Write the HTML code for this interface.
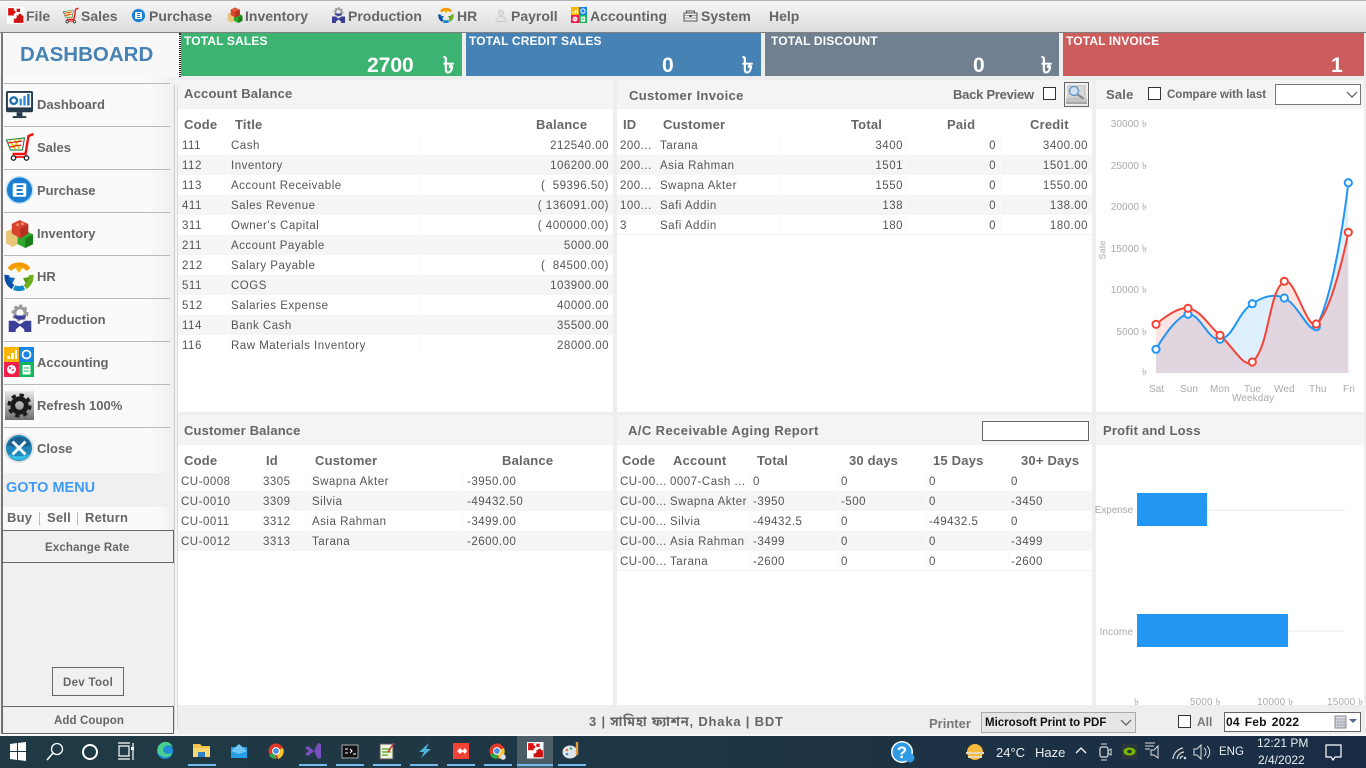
<!DOCTYPE html>
<html><head><meta charset="utf-8"><title>Dashboard</title>
<style>
html,body{margin:0;padding:0;width:1366px;height:768px;overflow:hidden;background:#eee;font-family:"Liberation Sans",sans-serif;color:#666}
*{box-sizing:border-box}
.a{position:absolute;display:block}
.t{position:absolute;white-space:nowrap;line-height:16px;height:16px}
.m{font-weight:bold;font-size:14px;color:#666;top:8px}
.k{font-weight:bold;font-size:12px;color:#fff;top:33px;letter-spacing:.15px}
.v{font-weight:bold;font-size:21px;color:#fff;top:57px;line-height:18px;height:18px}
.tk{font-weight:bold;font-size:23px;color:#fff;top:55px;line-height:20px;height:20px}
.h{font-weight:bold;font-size:13px;color:#666;letter-spacing:.2px;margin-top:1px}
.th{font-weight:bold;font-size:13px;color:#666;letter-spacing:.2px;margin-top:1px}
.c{font-size:11.5px;color:#555;letter-spacing:.5px;margin-top:1px}
.s{font-weight:bold;font-size:13px;color:#666;left:37px;margin-top:1px}
.row{position:absolute;height:20px}
.sh{background:#f5f5f5}
.sep{position:absolute;width:1px;background:#fafafa}
.ln{position:absolute;left:4px;width:166px;height:1px;background:#b8b8b8}
.ax{font-size:10px;color:#aaa;line-height:12px;height:12px;margin-top:1px;letter-spacing:.1px}
.w{color:#e8eef2;font-size:13px}
.ul{position:absolute;top:764px;height:2px;background:#76b9ed;width:28px}
.cb{position:absolute;width:13px;height:13px;border:1px solid #333;background:#fff}
</style></head>
<body>
<svg width="0" height="0" style="position:absolute">
<defs>
<symbol id="puz" viewBox="0 0 30 30"><rect width="30" height="30" fill="#fff"/><path d="M2 2h10v4a3 3 0 0 1 0 6v3H2z" fill="#d11"/><path d="M16 15h4a3 3 0 0 1 6 0h3v13H12V20a3 3 0 0 0 4-5z" fill="#c11"/><path d="M17 3h6v6h-6z" fill="#d11"/></symbol>
<symbol id="mon" viewBox="0 0 30 30"><rect x="1" y="1" width="28" height="22" rx="2" fill="#263a4c"/><rect x="3" y="3" width="24" height="15" fill="#fff"/><circle cx="9" cy="11" r="3.4" fill="none" stroke="#1c6fae" stroke-width="2.4"/><rect x="15" y="9" width="2.4" height="7" fill="#2a8fd8"/><rect x="19" y="6" width="2.4" height="10" fill="#2a8fd8"/><rect x="23" y="4" width="2.4" height="12" fill="#1c6fae"/><rect x="12" y="23" width="6" height="4" fill="#263a4c"/><rect x="8" y="27" width="14" height="2" fill="#263a4c"/></symbol>
<symbol id="cart" viewBox="0 0 30 30"><path d="M29 2l-5 2-3 18H8" fill="none" stroke="#e11" stroke-width="2.4"/><path d="M7 25h17" stroke="#e11" stroke-width="1.8"/><path d="M2 8l18-2-2 12H6z" fill="#fff" stroke="#0a7a3a" stroke-width="1"/><path d="M5 9l6 8M10 7l5 10M16 7L8 16" stroke="#e4c800" stroke-width="1.5"/><path d="M3 11l15-2M5 15l12-2" stroke="#d22" stroke-width="1.2"/><circle cx="9" cy="26" r="2.2" fill="#fff" stroke="#222" stroke-width="1.3"/><circle cx="22" cy="26" r="2.2" fill="#fff" stroke="#222" stroke-width="1.3"/></symbol>
<symbol id="pur" viewBox="0 0 30 30"><circle cx="15" cy="15" r="14.5" fill="#bfe0f8"/><circle cx="15" cy="15" r="13" fill="#1a7fd0"/><rect x="8" y="8" width="14" height="14" rx="2" fill="#fff"/><path d="M12 11h7M12 15h6M12 19h7" stroke="#1a7fd0" stroke-width="2"/></symbol>
<symbol id="inv" viewBox="0 0 30 30"><path d="M1 13l7-3 7 3v12l-7 4-7-4z" fill="#e8c678"/><path d="M13 16l8-4 8 4v10l-8 4-8-4z" fill="#2fa82f"/><path d="M21 20v10l8-4V16z" fill="#1c7d1c"/><path d="M7 5l8-4 9 4v10l-8 5-9-5z" fill="#d8442e"/><path d="M16 10v10l8-5V5z" fill="#b83020"/><circle cx="13" cy="6" r="1.5" fill="#ee8a70"/><circle cx="18" cy="5" r="1.5" fill="#ee8a70"/></symbol>
<symbol id="hr" viewBox="0 0 30 30"><g fill="none" stroke-width="5"><path d="M5.500 8.500a12 12 0 0 1 19 0" stroke="#f59a00"/><path d="M27 14a12 12 0 0 1-6 12" stroke="#6fb21e"/><path d="M20 26.500a12 12 0 0 1-10 0" stroke="#1487c9"/><path d="M9 26A12 12 0 0 1 3 14" stroke="#0b4da2"/></g><path d="M11 6h8l-4 6z" fill="#f4b400"/><path d="M26 16l-7 1 3 6z" fill="#5a9a18"/><path d="M4 16l7 1-3 6z" fill="#1267b5"/></symbol>
<symbol id="prod" viewBox="0 0 30 30"><circle cx="15" cy="8" r="6" fill="none" stroke="#9a9a9a" stroke-width="3.500"/><circle cx="15" cy="8" r="8.500" fill="none" stroke="#9a9a9a" stroke-width="2.500" stroke-dasharray="3.500 3"/><path d="M8 11a7 5 0 0 0 14 0z" fill="#3b3f98"/><path d="M2 17h7l6 4 6-4h7v13h-8v-3l-5-4-5 4v3H2z" fill="#3b3f98"/></symbol>
<symbol id="acc" viewBox="0 0 30 30"><rect width="15" height="15" fill="#fdb300"/><rect x="15" width="15" height="15" fill="#1784e8"/><rect y="15" width="15" height="15" fill="#f01f4b"/><rect x="15" y="15" width="15" height="15" fill="#12b85a"/><path d="M3 9h3v3H3zM7 6h3v6H7zM11 3h2v9h-2z" fill="#fff"/><circle cx="22.500" cy="7.500" r="4" fill="none" stroke="#fff" stroke-width="1.800"/><circle cx="7.500" cy="22.500" r="4.500" fill="#fff"/><circle cx="6" cy="21" r="1" fill="#f01f4b"/><circle cx="9" cy="23" r="1" fill="#f01f4b"/><rect x="18.500" y="18" width="8" height="9.500" fill="#fff"/><path d="M20 21h5M20 24h5" stroke="#12b85a"/></symbol>
<symbol id="ref" viewBox="0 0 30 30"><defs><linearGradient id="gg" x1="0" y1="0" x2="0" y2="1"><stop offset="0" stop-color="#e8e8e8"/><stop offset="1" stop-color="#6e6e6e"/></linearGradient></defs><rect width="30" height="30" fill="url(#gg)"/><circle cx="15" cy="15" r="7" fill="none" stroke="#1a1a1a" stroke-width="5"/><circle cx="15" cy="15" r="11" fill="none" stroke="#1a1a1a" stroke-width="3" stroke-dasharray="4.500 4.100"/></symbol>
<symbol id="cls" viewBox="0 0 30 30"><circle cx="15" cy="15" r="15" fill="#e2e2e2"/><circle cx="15" cy="15" r="13" fill="#1f86b8"/><path d="M3 12a13 13 0 0 1 24 0c-7 3-17 3-24 0z" fill="#1d5f8f"/><path d="M4 21a13 13 0 0 0 22 0c-6 3-16 3-22 0z" fill="#35c0e8"/><path d="M8.500 8.500l13 13M21.500 8.500l-13 13" stroke="#eef8fc" stroke-width="3"/></symbol>
<symbol id="pay" viewBox="0 0 30 30"><circle cx="15" cy="9" r="6" fill="#ddd" stroke="#aaa"/><path d="M4 28c0-8 5-11 11-11s11 3 11 11z" fill="#e4e4e4" stroke="#aaa"/></symbol>
<symbol id="sys" viewBox="0 0 30 30"><path d="M7 10V6h16v4" fill="none" stroke="#555" stroke-width="2"/><rect x="2" y="10" width="26" height="16" fill="#eee" stroke="#555" stroke-width="2"/><path d="M2 15h26M2 20h26" stroke="#555"/><rect x="13" y="14" width="4" height="4" fill="#333"/></symbol>
</defs>
</svg>

<!-- top menu -->
<div class="a" style="left:0;top:0;width:1366px;height:33px;background:linear-gradient(#f6f6f6,#dcdcdc);border-top:1px solid #b4b4bc;border-bottom:1px solid #808080"></div>
<svg class="a" style="left:7px;top:7px" width="17" height="17"><use href="#puz"/></svg><span class="t m" style="left:26px">File</span>
<svg class="a" style="left:62px;top:7px" width="17" height="17"><use href="#cart"/></svg><span class="t m" style="left:81px">Sales</span>
<svg class="a" style="left:131px;top:8px" width="15" height="15"><use href="#pur"/></svg><span class="t m" style="left:149px">Purchase</span>
<svg class="a" style="left:227px;top:7px" width="16" height="16"><use href="#inv"/></svg><span class="t m" style="left:245px">Inventory</span>
<svg class="a" style="left:331px;top:7px" width="15" height="17"><use href="#prod"/></svg><span class="t m" style="left:348px">Production</span>
<svg class="a" style="left:438px;top:7px" width="16" height="16"><use href="#hr"/></svg><span class="t m" style="left:457px">HR</span>
<svg class="a" style="left:494px;top:7px" width="14" height="17"><use href="#pay"/></svg><span class="t m" style="left:511px">Payroll</span>
<svg class="a" style="left:571px;top:7px" width="16" height="16"><use href="#acc"/></svg><span class="t m" style="left:590px">Accounting</span>
<svg class="a" style="left:683px;top:8px" width="15" height="15"><use href="#sys"/></svg><span class="t m" style="left:701px">System</span>
<span class="t m" style="left:769px">Help</span>

<!-- KPI -->
<div class="a" style="left:0;top:33px;width:179px;height:44px;background:#f8f8f8"></div>
<span class="t" style="left:20px;top:43px;font-weight:bold;font-size:20.500px;line-height:24px;height:24px;color:#4682b4">DASHBOARD</span>
<div class="a" style="left:179px;top:33px;width:2px;height:44px;border-left:1px dotted #222;border-right:1px dotted #222"></div>
<div class="a" style="left:181px;top:33px;width:281px;height:43px;background:#3cb371"></div>
<div class="a" style="left:466px;top:33px;width:295px;height:43px;background:#4682b4"></div>
<div class="a" style="left:765px;top:33px;width:294px;height:43px;background:#708090"></div>
<div class="a" style="left:1063px;top:33px;width:301px;height:43px;background:#cd5c5c"></div>
<span class="t k" style="left:184px">TOTAL SALES</span>
<span class="t k" style="left:469px">TOTAL CREDIT SALES</span>
<span class="t k" style="left:771px">TOTAL DISCOUNT</span>
<span class="t k" style="left:1066px">TOTAL INVOICE</span>
<span class="t v" style="left:367px">2700</span><span class="t tk" style="left:443px">৳</span>
<span class="t v" style="left:662px">0</span><span class="t tk" style="left:742px">৳</span>
<span class="t v" style="left:973px">0</span><span class="t tk" style="left:1041px">৳</span>
<span class="t v" style="left:1331px">1</span>

<!-- sidebar -->
<div class="a" style="left:1px;top:33px;width:2px;height:702px;background:#777"></div>
<div class="a" style="left:3px;top:77px;width:171px;height:396px;background:linear-gradient(90deg,#fafafa 85%,#f0f0f0)"></div>
<div class="a" style="left:175px;top:77px;width:3px;height:658px;background:#f5f5f5"></div>
<div class="a" style="left:174px;top:85px;width:1px;height:645px;background:#ccc"></div>
<div class="a" style="left:177px;top:85px;width:1px;height:645px;background:#d8d8d8"></div>
<div class="ln" style="top:83px"></div><div class="ln" style="top:126px"></div><div class="ln" style="top:169px"></div><div class="ln" style="top:212px"></div><div class="ln" style="top:255px"></div><div class="ln" style="top:298px"></div><div class="ln" style="top:341px"></div><div class="ln" style="top:384px"></div><div class="ln" style="top:427px"></div>
<svg class="a" style="left:5px;top:90px" width="29" height="29"><use href="#mon"/></svg><span class="t s" style="top:96px">Dashboard</span>
<svg class="a" style="left:4px;top:132px" width="31" height="30"><use href="#cart"/></svg><span class="t s" style="top:139px">Sales</span>
<svg class="a" style="left:5px;top:175px" width="29" height="30"><use href="#pur"/></svg><span class="t s" style="top:182px">Purchase</span>
<svg class="a" style="left:5px;top:219px" width="29" height="29"><use href="#inv"/></svg><span class="t s" style="top:225px">Inventory</span>
<svg class="a" style="left:4px;top:261px" width="30" height="30"><use href="#hr"/></svg><span class="t s" style="top:268px">HR</span>
<svg class="a" style="left:7px;top:304px" width="26" height="30"><use href="#prod"/></svg><span class="t s" style="top:311px">Production</span>
<svg class="a" style="left:4px;top:347px" width="30" height="30"><use href="#acc"/></svg><span class="t s" style="top:354px">Accounting</span>
<svg class="a" style="left:5px;top:391px" width="29" height="29"><use href="#ref"/></svg><span class="t s" style="top:397px">Refresh 100%</span>
<svg class="a" style="left:4px;top:433px" width="30" height="30"><use href="#cls"/></svg><span class="t s" style="top:440px">Close</span>

<div class="a" style="left:3px;top:473px;width:171px;height:262px;background:#f0f0f0"></div>
<span class="t" style="left:6px;top:480px;font-weight:bold;font-size:14.500px;color:#3d9bf5">GOTO MENU</span>
<div class="a" style="left:3px;top:507px;width:171px;height:23px;background:linear-gradient(90deg,#fafafa 90%,#f0f0f0)"></div>
<span class="t th" style="left:7px;top:510px;margin-top:0">Buy</span><div class="a" style="left:39px;top:512px;width:1px;height:13px;background:#bbb"></div>
<span class="t th" style="left:47px;top:510px;margin-top:0">Sell</span><div class="a" style="left:77px;top:512px;width:1px;height:13px;background:#bbb"></div>
<span class="t th" style="left:85px;top:510px;margin-top:0">Return</span>
<div class="a" style="left:2px;top:530px;width:172px;height:33px;border:1px solid #666;background:#f0f0f0"></div>
<span class="t" style="left:45px;top:540px;font-weight:bold;font-size:11.500px;letter-spacing:.15px">Exchange Rate</span>
<div class="a" style="left:52px;top:667px;width:72px;height:29px;border:1px solid #666;background:#f0f0f0"></div>
<span class="t" style="left:63px;top:675px;font-weight:bold;font-size:11.500px;letter-spacing:.3px">Dev Tool</span>
<div class="a" style="left:2px;top:706px;width:172px;height:28px;border:1px solid #666;background:#f0f0f0"></div>
<span class="t" style="left:54px;top:713px;font-weight:bold;font-size:11.500px;letter-spacing:.1px">Add Coupon</span>

<!-- panels -->
<div class="a" style="left:178px;top:80px;width:435px;height:29px;background:#f4f4f4"></div>
<div class="a" style="left:178px;top:109px;width:435px;height:303px;background:#fff"></div>
<div class="a" style="left:617px;top:80px;width:475px;height:29px;background:#f4f4f4"></div>
<div class="a" style="left:617px;top:109px;width:475px;height:303px;background:#fff"></div>
<div class="a" style="left:1096px;top:80px;width:268px;height:29px;background:#f4f4f4"></div>
<div class="a" style="left:1096px;top:109px;width:268px;height:303px;background:#fff"></div>
<div class="a" style="left:178px;top:415px;width:435px;height:30px;background:#f4f4f4"></div>
<div class="a" style="left:178px;top:445px;width:435px;height:260px;background:#fff"></div>
<div class="a" style="left:617px;top:415px;width:475px;height:30px;background:#f4f4f4"></div>
<div class="a" style="left:617px;top:445px;width:475px;height:260px;background:#fff"></div>
<div class="a" style="left:1096px;top:415px;width:268px;height:30px;background:#f4f4f4"></div>
<div class="a" style="left:1096px;top:445px;width:268px;height:260px;background:#fff"></div>

<!-- Account balance -->
<span class="t h" style="left:184px;top:85px">Account Balance</span>
<span class="t th" style="left:184px;top:116px">Code</span><span class="t th" style="left:235px;top:116px">Title</span><span class="t th" style="left:536px;top:116px">Balance</span>
<div class="row sh" style="left:178px;top:155px;width:435px"></div><div class="row sh" style="left:178px;top:195px;width:435px"></div><div class="row sh" style="left:178px;top:235px;width:435px"></div><div class="row sh" style="left:178px;top:275px;width:435px"></div><div class="row sh" style="left:178px;top:315px;width:435px"></div>
<div class="sep" style="left:228px;top:135px;height:220px"></div><div class="sep" style="left:420px;top:135px;height:220px;background:#f7f7f7"></div>
<span class="t c" style="left:182px;top:137px">111</span><span class="t c" style="left:231px;top:137px">Cash</span><span class="t c" style="right:757px;top:137px">212540.00</span>
<span class="t c" style="left:182px;top:157px">112</span><span class="t c" style="left:231px;top:157px">Inventory</span><span class="t c" style="right:757px;top:157px">106200.00</span>
<span class="t c" style="left:182px;top:177px">113</span><span class="t c" style="left:231px;top:177px">Account Receivable</span><span class="t c" style="right:757px;top:177px;white-space:pre">(  59396.50)</span>
<span class="t c" style="left:182px;top:197px">411</span><span class="t c" style="left:231px;top:197px">Sales Revenue</span><span class="t c" style="right:757px;top:197px;white-space:pre">( 136091.00)</span>
<span class="t c" style="left:182px;top:217px">311</span><span class="t c" style="left:231px;top:217px">Owner's Capital</span><span class="t c" style="right:757px;top:217px;white-space:pre">( 400000.00)</span>
<span class="t c" style="left:182px;top:237px">211</span><span class="t c" style="left:231px;top:237px">Account Payable</span><span class="t c" style="right:757px;top:237px">5000.00</span>
<span class="t c" style="left:182px;top:257px">212</span><span class="t c" style="left:231px;top:257px">Salary Payable</span><span class="t c" style="right:757px;top:257px;white-space:pre">(  84500.00)</span>
<span class="t c" style="left:182px;top:277px">511</span><span class="t c" style="left:231px;top:277px">COGS</span><span class="t c" style="right:757px;top:277px">103900.00</span>
<span class="t c" style="left:182px;top:297px">512</span><span class="t c" style="left:231px;top:297px">Salaries Expense</span><span class="t c" style="right:757px;top:297px">40000.00</span>
<span class="t c" style="left:182px;top:317px">114</span><span class="t c" style="left:231px;top:317px">Bank Cash</span><span class="t c" style="right:757px;top:317px">35500.00</span>
<span class="t c" style="left:182px;top:337px">116</span><span class="t c" style="left:231px;top:337px">Raw Materials Inventory</span><span class="t c" style="right:757px;top:337px">28000.00</span>

<!-- Customer invoice -->
<span class="t h" style="left:629px;top:87px;letter-spacing:.35px">Customer Invoice</span>
<span class="t th" style="left:953px;top:86px;letter-spacing:-.25px">Back Preview</span>
<div class="cb" style="left:1043px;top:87px"></div>
<div class="a" style="left:1064px;top:82px;width:25px;height:25px;border:1px solid #666;background:#eee"></div>
<svg class="a" style="left:1065px;top:83px" width="23" height="23"><rect x="3" y="3" width="17" height="12" fill="#d8d8d8" stroke="#bbb"/><rect x="1" y="15" width="21" height="6" fill="#c4c4c4"/><rect x="1" y="19" width="21" height="2" fill="#a8a8a8"/><circle cx="9" cy="8" r="4.500" fill="#cfe2f3" stroke="#5b93c8" stroke-width="1.300"/><path d="M12.500 11.500l6 4" stroke="#888" stroke-width="2"/></svg>
<span class="t th" style="left:623px;top:116px">ID</span><span class="t th" style="left:663px;top:116px">Customer</span><span class="t th" style="left:851px;top:116px">Total</span><span class="t th" style="left:947px;top:116px">Paid</span><span class="t th" style="left:1030px;top:116px">Credit</span>
<div class="row sh" style="left:617px;top:155px;width:475px"></div><div class="row sh" style="left:617px;top:195px;width:475px"></div>
<div class="sep" style="left:657px;top:135px;height:100px"></div><div class="sep" style="left:780px;top:135px;height:100px;background:#f7f7f7"></div><div class="sep" style="left:905px;top:135px;height:100px"></div><div class="sep" style="left:1000px;top:135px;height:100px"></div>
<div class="a" style="left:617px;top:234px;width:475px;height:1px;background:#f2f2f2"></div>
<span class="t c" style="left:620px;top:137px">200...</span><span class="t c" style="left:660px;top:137px">Tarana</span><span class="t c" style="right:463px;top:137px">3400</span><span class="t c" style="right:370px;top:137px">0</span><span class="t c" style="right:278px;top:137px">3400.00</span>
<span class="t c" style="left:620px;top:157px">200...</span><span class="t c" style="left:660px;top:157px">Asia Rahman</span><span class="t c" style="right:463px;top:157px">1501</span><span class="t c" style="right:370px;top:157px">0</span><span class="t c" style="right:278px;top:157px">1501.00</span>
<span class="t c" style="left:620px;top:177px">200...</span><span class="t c" style="left:660px;top:177px">Swapna Akter</span><span class="t c" style="right:463px;top:177px">1550</span><span class="t c" style="right:370px;top:177px">0</span><span class="t c" style="right:278px;top:177px">1550.00</span>
<span class="t c" style="left:620px;top:197px">100...</span><span class="t c" style="left:660px;top:197px">Safi Addin</span><span class="t c" style="right:463px;top:197px">138</span><span class="t c" style="right:370px;top:197px">0</span><span class="t c" style="right:278px;top:197px">138.00</span>
<span class="t c" style="left:620px;top:217px">3</span><span class="t c" style="left:660px;top:217px">Safi Addin</span><span class="t c" style="right:463px;top:217px">180</span><span class="t c" style="right:370px;top:217px">0</span><span class="t c" style="right:278px;top:217px">180.00</span>

<!-- Sale chart -->
<span class="t th" style="left:1106px;top:86px">Sale</span>
<div class="cb" style="left:1148px;top:87px"></div>
<span class="t" style="left:1167px;top:87px;font-weight:bold;font-size:11.500px">Compare with last</span>
<div class="a" style="left:1275px;top:84px;width:86px;height:21px;border:1px solid #777;background:#fff"></div>
<svg class="a" style="left:1346px;top:90px" width="12" height="10"><path d="M1 2l5 5 5-5" fill="none" stroke="#555" stroke-width="1.200"/></svg>
<svg class="a" style="left:1096px;top:109px;overflow:visible" width="268" height="303" viewBox="1096 109 268 303">
<path d="M1156 349.300C1156 349.300 1174.200 316.500 1188 314.300C1199.800 312.500 1208.300 341.200 1220 339.300C1233.900 337 1237.100 313.500 1252.300 303.700C1262.700 297 1273.200 293 1284.300 298C1298.800 304.500 1310.500 337.100 1316.300 326.700C1336.100 291 1348.300 182.700 1348.300 182.700V373H1156Z" fill="rgba(33,150,243,.15)"/>
<path d="M1156 324.300C1156 324.300 1176.200 306.300 1188 308.300C1201.800 310.700 1207.200 324.600 1220 335.300C1232.800 346 1244 369 1252.300 362C1269.600 347.400 1268.400 290.700 1284.300 281.300C1294 275.500 1307.200 331 1316.300 324C1332.800 311.400 1348.300 232.300 1348.300 232.300V373H1156Z" fill="rgba(244,67,54,.15)"/>
<path d="M1156 349.300C1156 349.300 1174.200 316.500 1188 314.300C1199.800 312.500 1208.300 341.200 1220 339.300C1233.900 337 1237.100 313.500 1252.300 303.700C1262.700 297 1273.200 293 1284.300 298C1298.800 304.500 1310.500 337.100 1316.300 326.700C1336.100 291 1348.300 182.700 1348.300 182.700" fill="none" stroke="#2196f3" stroke-width="2"/>
<path d="M1156 324.300C1156 324.300 1176.200 306.300 1188 308.300C1201.800 310.700 1207.200 324.600 1220 335.300C1232.800 346 1244 369 1252.300 362C1269.600 347.400 1268.400 290.700 1284.300 281.300C1294 275.500 1307.200 331 1316.300 324C1332.800 311.400 1348.300 232.300 1348.300 232.300" fill="none" stroke="#f44336" stroke-width="2"/>
<g fill="#fff" stroke="#2196f3" stroke-width="2"><circle cx="1156" cy="349.300" r="3.600"/><circle cx="1188" cy="314.300" r="3.600"/><circle cx="1220" cy="339.300" r="3.600"/><circle cx="1252.300" cy="303.700" r="3.600"/><circle cx="1284.300" cy="298" r="3.600"/><circle cx="1316.300" cy="326.700" r="3.600"/><circle cx="1348.300" cy="182.700" r="3.600"/></g>
<g fill="#fff" stroke="#f44336" stroke-width="2"><circle cx="1156" cy="324.300" r="3.600"/><circle cx="1188" cy="308.300" r="3.600"/><circle cx="1220" cy="335.300" r="3.600"/><circle cx="1252.300" cy="362" r="3.600"/><circle cx="1284.300" cy="281.300" r="3.600"/><circle cx="1316.300" cy="324" r="3.600"/><circle cx="1348.300" cy="232.300" r="3.600"/></g>
</svg>
<span class="t ax" style="right:219px;top:118px">30000 ৳</span>
<span class="t ax" style="right:219px;top:160px">25000 ৳</span>
<span class="t ax" style="right:219px;top:201px">20000 ৳</span>
<span class="t ax" style="right:219px;top:243px">15000 ৳</span>
<span class="t ax" style="right:219px;top:284px">10000 ৳</span>
<span class="t ax" style="right:219px;top:326px">5000 ৳</span>
<span class="t ax" style="right:219px;top:366px">৳</span>
<span class="t ax" style="left:1149px;top:383px">Sat</span><span class="t ax" style="left:1180px;top:383px">Sun</span><span class="t ax" style="left:1210px;top:383px">Mon</span><span class="t ax" style="left:1244px;top:383px">Tue</span><span class="t ax" style="left:1274px;top:383px">Wed</span><span class="t ax" style="left:1309px;top:383px">Thu</span><span class="t ax" style="left:1343px;top:383px">Fri</span>
<span class="t ax" style="left:1232px;top:392px">Weekday</span>
<span class="t ax" style="left:1093px;top:243px;transform:rotate(-90deg);font-weight:bold;color:#c0c0c0;font-size:9px">Sale</span>

<!-- Customer balance -->
<span class="t h" style="left:184px;top:422px;letter-spacing:.15px">Customer Balance</span>
<span class="t th" style="left:184px;top:452px">Code</span><span class="t th" style="left:266px;top:452px">Id</span><span class="t th" style="left:315px;top:452px">Customer</span><span class="t th" style="left:502px;top:452px">Balance</span>
<div class="row sh" style="left:178px;top:491px;width:435px"></div><div class="row sh" style="left:178px;top:531px;width:435px"></div>
<div class="sep" style="left:261px;top:471px;height:80px"></div><div class="sep" style="left:309px;top:471px;height:80px"></div><div class="sep" style="left:462px;top:471px;height:80px;background:#f7f7f7"></div>
<span class="t c" style="left:181px;top:473px">CU-0008</span><span class="t c" style="left:263px;top:473px">3305</span><span class="t c" style="left:312px;top:473px">Swapna Akter</span><span class="t c" style="left:467px;top:473px">-3950.00</span>
<span class="t c" style="left:181px;top:493px">CU-0010</span><span class="t c" style="left:263px;top:493px">3309</span><span class="t c" style="left:312px;top:493px">Silvia</span><span class="t c" style="left:467px;top:493px">-49432.50</span>
<span class="t c" style="left:181px;top:513px">CU-0011</span><span class="t c" style="left:263px;top:513px">3312</span><span class="t c" style="left:312px;top:513px">Asia Rahman</span><span class="t c" style="left:467px;top:513px">-3499.00</span>
<span class="t c" style="left:181px;top:533px">CU-0012</span><span class="t c" style="left:263px;top:533px">3313</span><span class="t c" style="left:312px;top:533px">Tarana</span><span class="t c" style="left:467px;top:533px">-2600.00</span>

<!-- Aging -->
<span class="t h" style="left:628px;top:422px;letter-spacing:.42px">A/C Receivable Aging Report</span>
<div class="a" style="left:982px;top:421px;width:107px;height:20px;border:1px solid #666;background:#fff"></div>
<span class="t th" style="left:622px;top:452px">Code</span><span class="t th" style="left:673px;top:452px">Account</span><span class="t th" style="left:757px;top:452px">Total</span><span class="t th" style="left:849px;top:452px">30 days</span><span class="t th" style="left:933px;top:452px">15 Days</span><span class="t th" style="left:1021px;top:452px">30+ Days</span>
<div class="row sh" style="left:617px;top:491px;width:475px"></div><div class="row sh" style="left:617px;top:531px;width:475px"></div>
<div class="sep" style="left:667px;top:471px;height:100px"></div><div class="sep" style="left:750px;top:471px;height:100px"></div><div class="sep" style="left:838px;top:471px;height:100px"></div><div class="sep" style="left:926px;top:471px;height:100px"></div><div class="sep" style="left:1008px;top:471px;height:100px"></div>
<div class="a" style="left:617px;top:570px;width:475px;height:1px;background:#f2f2f2"></div>
<span class="t c" style="left:620px;top:473px">CU-00...</span><span class="t c" style="left:670px;top:473px">0007-Cash ...</span><span class="t c" style="left:753px;top:473px">0</span><span class="t c" style="left:841px;top:473px">0</span><span class="t c" style="left:929px;top:473px">0</span><span class="t c" style="left:1011px;top:473px">0</span>
<span class="t c" style="left:620px;top:493px">CU-00...</span><span class="t c" style="left:670px;top:493px">Swapna Akter</span><span class="t c" style="left:753px;top:493px">-3950</span><span class="t c" style="left:841px;top:493px">-500</span><span class="t c" style="left:929px;top:493px">0</span><span class="t c" style="left:1011px;top:493px">-3450</span>
<span class="t c" style="left:620px;top:513px">CU-00...</span><span class="t c" style="left:670px;top:513px">Silvia</span><span class="t c" style="left:753px;top:513px">-49432.5</span><span class="t c" style="left:841px;top:513px">0</span><span class="t c" style="left:929px;top:513px">-49432.5</span><span class="t c" style="left:1011px;top:513px">0</span>
<span class="t c" style="left:620px;top:533px">CU-00...</span><span class="t c" style="left:670px;top:533px">Asia Rahman</span><span class="t c" style="left:753px;top:533px">-3499</span><span class="t c" style="left:841px;top:533px">0</span><span class="t c" style="left:929px;top:533px">0</span><span class="t c" style="left:1011px;top:533px">-3499</span>
<span class="t c" style="left:620px;top:553px">CU-00...</span><span class="t c" style="left:670px;top:553px">Tarana</span><span class="t c" style="left:753px;top:553px">-2600</span><span class="t c" style="left:841px;top:553px">0</span><span class="t c" style="left:929px;top:553px">0</span><span class="t c" style="left:1011px;top:553px">-2600</span>

<!-- P&L -->
<span class="t h" style="left:1103px;top:422px">Profit and Loss</span>
<div class="a" style="left:1137px;top:509px;width:208px;height:2px;background:#f4f4f4"></div>
<div class="a" style="left:1137px;top:630px;width:208px;height:2px;background:#f4f4f4"></div>
<div class="a" style="left:1137px;top:493px;width:70px;height:33px;background:#2196f3"></div>
<div class="a" style="left:1137px;top:614px;width:151px;height:33px;background:#2196f3"></div>
<span class="t ax" style="right:233px;top:504px;letter-spacing:-.1px">Expense</span>
<span class="t ax" style="right:233px;top:626px">Income</span>
<span class="t ax" style="left:1134px;top:696px">৳</span><span class="t ax" style="left:1190px;top:696px">5000 ৳</span><span class="t ax" style="left:1257px;top:696px">10000 ৳</span><span class="t ax" style="left:1327px;top:696px">15000 ৳</span>

<!-- footer -->
<div class="a" style="left:178px;top:705px;width:1188px;height:29px;background:#eee"></div>
<div class="a" style="left:0;top:734px;width:1366px;height:2px;background:#f8f8f8"></div>
<span class="t" style="left:589px;top:714px;font-weight:bold;font-size:13px;font-family:'Liberation Sans','Noto Sans Bengali',sans-serif;letter-spacing:.8px">3 | সামিহা ফ্যাশন, Dhaka | BDT</span>
<span class="t" style="left:929px;top:716px;font-weight:bold;font-size:13px;color:#777">Printer</span>
<div class="a" style="left:981px;top:712px;width:155px;height:21px;background:#e6e6e6;border:1px solid #aaa"></div>
<span class="t" style="left:985px;top:715px;font-weight:bold;font-size:11.500px;color:#111">Microsoft Print to PDF</span>
<svg class="a" style="left:1120px;top:718px" width="12" height="10"><path d="M1 2l5 5 5-5" fill="none" stroke="#555" stroke-width="1.200"/></svg>
<div class="cb" style="left:1178px;top:715px"></div>
<span class="t" style="left:1197px;top:714px;font-weight:bold;font-size:12px;color:#777">All</span>
<div class="a" style="left:1224px;top:712px;width:137px;height:20px;background:#fff;border:1px solid #666"></div>
<span class="t" style="left:1226px;top:714px;font-weight:bold;font-size:12px;color:#111;letter-spacing:.2px;word-spacing:1.500px">04 Feb 2022</span>
<svg class="a" style="left:1334px;top:715px" width="24" height="14"><rect x="1" y="1" width="11" height="12" fill="#dde" stroke="#888"/><path d="M1 4h11M1 7h11M1 10h11M4 4v9M7 4v9M10 4v9" stroke="#999" stroke-width=".7"/><path d="M15 4h8l-4 4z" fill="#4a6a94"/></svg>

<!-- taskbar -->
<div class="a" style="left:0;top:736px;width:1366px;height:32px;background:linear-gradient(90deg,#1f3a45,#1f3644 50%,#192c45)"></div>
<div class="a" style="left:517px;top:736px;width:36px;height:32px;background:#4b5e68"></div>
<svg class="a" style="left:0;top:736px" width="1366" height="32">
<g fill="#fff"><path d="M10 8l7-1v8h-7zM18 7l8-1v9h-8zM10 16h7v8l-7-1zM18 16h8v9l-8-1z"/></g>
<circle cx="57" cy="13" r="5.500" fill="none" stroke="#fff" stroke-width="1.300"/><path d="M53 17l-6 7" stroke="#fff" stroke-width="1.500"/>
<circle cx="90" cy="16" r="7" fill="none" stroke="#fff" stroke-width="2"/>
<path d="M119 10h10v10h-10zM118 7h12M118 23h12M133 7v17" fill="none" stroke="#fff" stroke-width="1.200"/><rect x="131" y="11" width="3" height="3" fill="#fff"/>
<circle cx="165" cy="15" r="8" fill="#1f8fd8"/><path d="M158 17a8 8 0 0 1 15-6c-3-3-9-2-10 2-1 4 4 6 9 4-2 5-9 6-14 0z" fill="#4ad08c"/>
<path d="M193 8h7l2 2h8v11h-17z" fill="#f3c34a"/><rect x="193" y="12" width="17" height="9" fill="#f7d96f"/><rect x="198" y="16" width="7" height="5" fill="#2f7fc8"/>
<rect x="231" y="11" width="16" height="11" fill="#25a0e6"/><path d="M231 15l8-7 8 7-8 3z" fill="#6ec6f5"/>
<circle cx="276" cy="15" r="7.500" fill="#e0392b"/><path d="M276 15L269 19a8 8 0 0 0 7 4z" fill="#2da94f"/><path d="M276 15l7-3a8 8 0 0 1-5 11z" fill="#f7c52a"/><circle cx="276" cy="15" r="3.400" fill="#4a90e2" stroke="#fff"/>
<path d="M305 12l3-2 6 5 4-8 3 1v14l-3 1-4-8-6 5-3-2 4-3z" fill="#7a4fc0"/>
<rect x="342" y="9" width="16" height="13" fill="#111" stroke="#aaa"/><path d="M345 13h3M345 17h3M350 13l2 2-2 2M353 18h3" stroke="#fff" fill="none"/>
<rect x="380" y="8" width="13" height="15" fill="#f2f2e0" stroke="#555"/><path d="M382 13h9M382 16h9M382 19h6" stroke="#6db33f" stroke-width="1.400"/><path d="M388 16l6-9" stroke="#c33" stroke-width="1.500"/>
<path d="M429 7l-10 9h5l-3 6 10-9h-5z" fill="#4fb4dc"/>
<rect x="453" y="7" width="16" height="16" fill="#f44336"/><path d="M457 15l3-3 3 3-3 3zM462 15l3-3 2 3-2 3z" fill="#fff"/>
<circle cx="497" cy="15" r="7.500" fill="#e0392b"/><path d="M497 15l-7 4a8 8 0 0 0 7 4z" fill="#2da94f"/><path d="M497 15l7-3a8 8 0 0 1-5 11z" fill="#f7c52a"/><circle cx="497" cy="15" r="3.400" fill="#4a90e2" stroke="#fff"/><circle cx="503" cy="21" r="2.800" fill="#dde"/>
<g transform="translate(527,6) scale(.55)"><use href="#puz" width="30" height="30"/></g>
<ellipse cx="570" cy="16" rx="7.500" ry="6.500" fill="#dfe6ea"/><circle cx="567" cy="14" r="1.300" fill="#e74"/><circle cx="571" cy="12.500" r="1.300" fill="#4a8"/><circle cx="567" cy="18" r="1.300" fill="#48c"/><path d="M577 6v13" stroke="#e39a3a" stroke-width="2.400"/>
<circle cx="902" cy="16" r="11" fill="#fff"/><circle cx="902" cy="16" r="9.500" fill="#2f9be6"/><text x="902" y="22" font-family="Liberation Sans" font-weight="bold" font-size="17" fill="#fff" text-anchor="middle">?</text><circle cx="910" cy="22" r="4.500" fill="#2f9be6"/>
<circle cx="975" cy="16" r="8" fill="#f7bb3c"/><path d="M966 17h18M968 21h14" stroke="#e4d8b8" stroke-width="2"/>
<path d="M1076 17l5-5 5 5" fill="none" stroke="#fff" stroke-width="1.300"/>
<rect x="1100" y="11" width="8" height="10" rx="2" fill="none" stroke="#ddd" stroke-width="1.200"/><path d="M1108 15l3-2v6l-3-2zM1101 8h6M1101 24h6" fill="none" stroke="#ddd"/>
<rect x="1122" y="8" width="15" height="15" fill="#2c363c"/><ellipse cx="1129.500" cy="15.500" rx="6" ry="4" fill="#76b900"/><ellipse cx="1129.500" cy="15.500" rx="2.500" ry="1.800" fill="#2c363c"/>
<path d="M1145 7h10M1145 10h9M1145 13h5M1158 10v12l-4-3h-3v-5h3z" fill="none" stroke="#ddd"/>
<path d="M1173 23a12 12 0 0 1 10-11M1177 23a8 8 0 0 1 7-7M1180 23a4 4 0 0 1 3-3" fill="none" stroke="#ddd" stroke-width="1.200"/><circle cx="1185" cy="22" r="1.300" fill="#ddd"/>
<path d="M1194 13h3l4-4v14l-4-4h-3zM1204 12a5 5 0 0 1 0 8M1207 10a8 8 0 0 1 0 12" fill="none" stroke="#ddd"/>
<path d="M1326 9h15v12h-6l-2 3-2-3h-5z" fill="none" stroke="#fff" stroke-width="1.200"/>
</svg>
<div class="ul" style="left:188px"></div><div class="ul" style="left:299px"></div><div class="ul" style="left:336px"></div><div class="ul" style="left:373px"></div><div class="ul" style="left:410px"></div><div class="ul" style="left:447px"></div><div class="ul" style="left:484px"></div><div class="ul" style="left:517px;width:36px"></div><div class="ul" style="left:558px"></div>
<span class="t w" style="left:996px;top:745px">24°C</span>
<span class="t w" style="left:1035px;top:745px">Haze</span>
<span class="t w" style="left:1219px;top:744px;font-size:11.500px">ENG</span>
<span class="t w" style="left:1257px;top:735px;font-size:12px">12:21 PM</span>
<span class="t w" style="left:1258px;top:752px;font-size:12px">2/4/2022</span>
</body></html>
